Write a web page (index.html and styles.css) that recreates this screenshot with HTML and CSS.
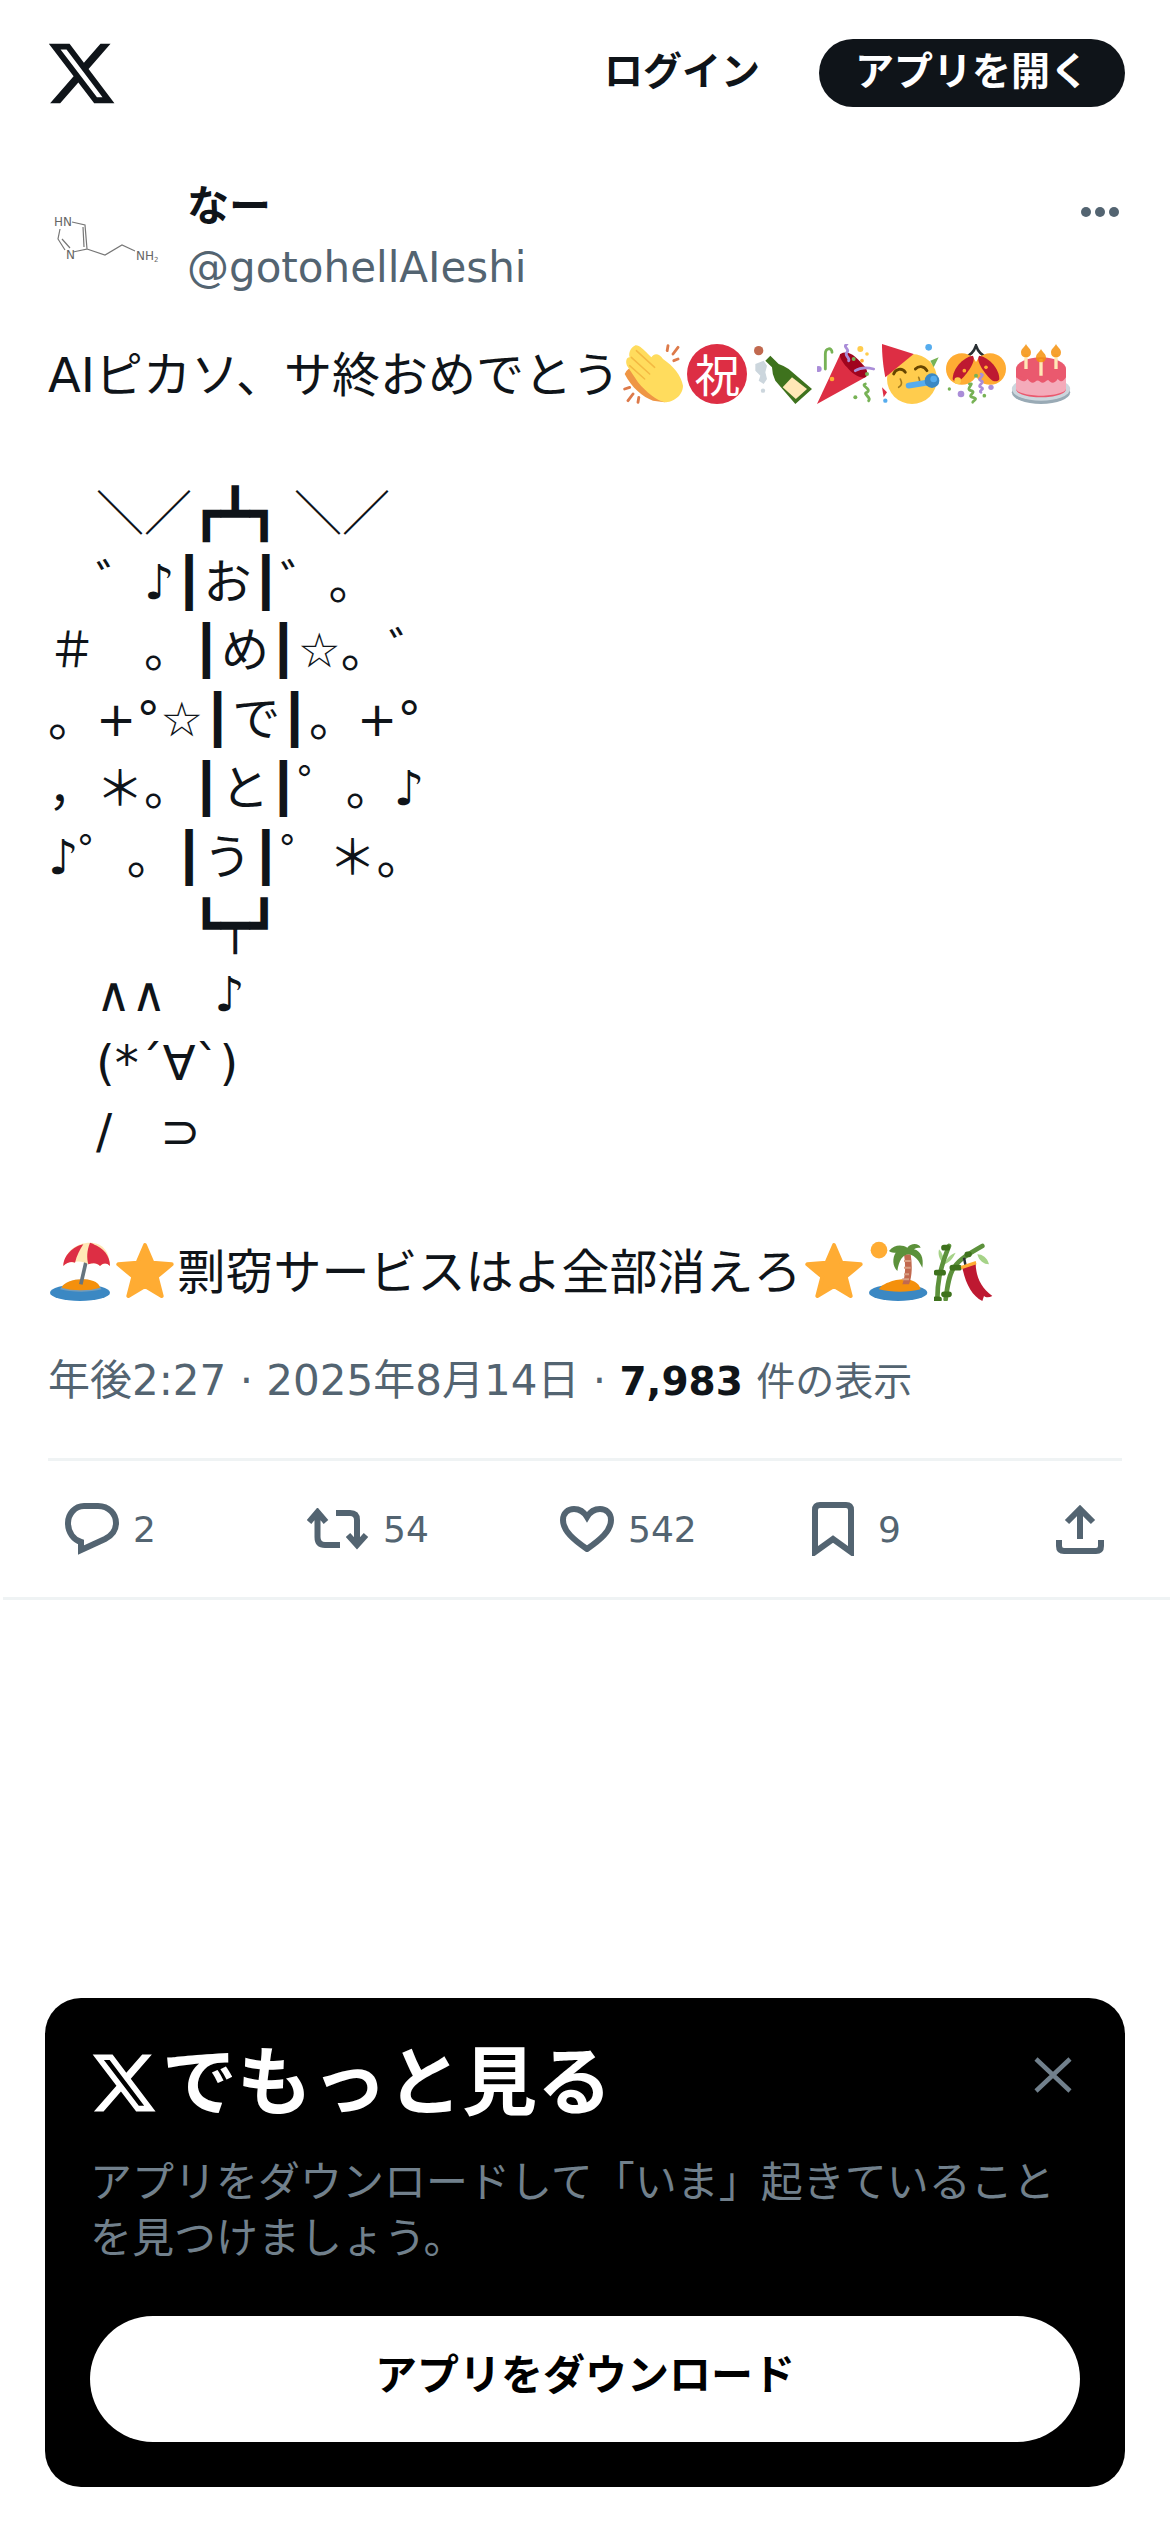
FILE: index.html
```html
<!DOCTYPE html>
<html lang="ja">
<head>
  <meta charset="UTF-8" />
  <meta name="viewport" content="width=device-width, initial-scale=1" />
  <title>なー on X</title>
  <link rel="stylesheet" href="styles.css">
</head>
<body>

  <svg class="defs" width="0" height="0">
    <symbol id="x-logo" viewBox="0 0 24 24"><path d="M18.244 2.25h3.308l-7.227 8.26 8.502 11.24H16.17l-5.214-6.817L4.99 21.75H1.68l7.73-8.835L1.254 2.25H8.08l4.713 6.231zm-1.161 17.52h1.833L7.084 4.126H5.117z"/></symbol>

    <symbol id="e-clap" viewBox="0 0 36 36">
      <path fill="#EF9645" d="M1 18C3 14 6 13 8 15L28 28 25 35 18 34C12 32 5 26 1 18Z"/>
      <path fill="#FFDC5D" d="M7 1C9 0 12 3 15 6L17 8C19 5 22 6 24 9 30 13 35 19 36 25 36 31 30 35 25 35 20 34 14 29 9 23L3 14C1 11 2 8 4 8 3 5 5 2 7 1Z"/>
      <g fill="none" stroke="#F4B942" stroke-width=".9" stroke-linecap="round"><path d="M8 4 19 14M5 8 16 18M4 13 13 21"/></g>
      <g fill="none" stroke="#DD7A4A" stroke-width="1.7" stroke-linecap="round"><path d="M27 1 26.500 4M33 2 30 6M33 9 30.500 10M1 27 4 26M3 34 6 30M9 35 9.500 32"/></g>
    </symbol>

    <symbol id="e-bottle" viewBox="0 0 36 36">
      <circle cx="4" cy="4" r="2.800" fill="#C1694F"/>
      <path fill="#CCD6DD" d="M2 12l5-2 2 3-1 4 1 4-2 3-3-2 1-3-3-3z"/>
      <circle cx="6.600" cy="28" r="1.300" fill="#CCD6DD"/>
      <path fill="#3E721D" d="M8 10 11 7 16 12Q19 13 22 15L36 27 26 36 14 22Q12 18 12 14Z"/>
      <path fill="#FFE8B6" d="M24 20 33 27 26.300 33 18.400 26Z"/>
    </symbol>

    <symbol id="e-popper" viewBox="0 0 36 36">
      <path fill="#DD2E44" d="M0 36 14 6l15 14z"/>
      <path fill="#A0041E" d="M14 6c5-3 10 2 15 8 2 3 1 6 0 6-3 1-8-2-11-6-3-3-5-7-4-8z"/>
      <circle cx="9" cy="21" r="1.400" fill="#FFAC33"/>
      <g fill="none" stroke-width="1.700" stroke-linecap="round">
        <path stroke="#77B255" d="M5 15V6c0-4 4-4 4-1"/>
        <path stroke="#AA8DD8" d="M18 0c-3 2 2 3 0 5s2 3 1 5M23 16c3-2 7-2 11-1"/>
        <path stroke="#77B255" d="M29 24c-3 1 4 3 1 5-3 1 3 3 1 5"/>
      </g>
      <circle cx="1" cy="15" r="1.800" fill="#AA8DD8"/><circle cx="26" cy="3" r="1.800" fill="#FFCC4D"/>
      <circle cx="22" cy="9" r="1.200" fill="#77B255"/><circle cx="27" cy="10" r="1.100" fill="#FFAC33"/>
      <circle cx="30" cy="6" r="1.100" fill="#FFCC4D"/><circle cx="30" cy="18" r="1.200" fill="#77B255"/>
      <circle cx="23" cy="32" r="1.200" fill="#77B255"/>
    </symbol>

    <symbol id="e-party" viewBox="0 0 36 36">
      <circle cx="18" cy="21" r="15" fill="#FFCC4D"/>
      <path fill="#DD2E44" d="M0 0 19 6 2 20c0 0-2-9-2-20z"/>
      <path fill="#DD2E44" d="M1 32l-1-6 3 3z"/>
      <path fill="#77B255" d="M34 8l-3 6-2-4z"/>
      <circle cx="28" cy="2" r="2" fill="#55ACEE"/><circle cx="2" cy="34" r="1.300" fill="#55ACEE"/>
      <g fill="none" stroke="#664500" stroke-width="1.700" stroke-linecap="round">
        <path d="M7 18c1-3 5-4 7-1M20 15c2-2 5-2 7 1"/>
        <path d="M10 26c2-1 2-3 1-5M22 25c1-2 1-3 0-5" stroke-width="1" opacity=".6"/>
      </g>
      <path d="M16 25 28 23" stroke="#55ACEE" stroke-width="3.500" stroke-linecap="round"/>
      <circle cx="30" cy="22" r="4.400" fill="#3B88C3"/><circle cx="31" cy="21" r="2" fill="#55ACEE"/>
    </symbol>

    <symbol id="e-ball" viewBox="0 0 36 36">
      <path d="M11 8c4-1 6-4 7-7 1 3 3 6 7 7" fill="none" stroke="#292F33" stroke-width="1.600"/>
      <circle cx="9.500" cy="15" r="9.500" fill="#FFAC33"/><circle cx="26.500" cy="15" r="9.500" fill="#FFAC33"/>
      <path fill="#BE1931" d="M4 21c0-6 6-13 12-14 3 3-5 13-8 15-2 1-4 0-4-1z"/>
      <path fill="#BE1931" d="M32 21c0-6-6-13-12-14-3 3 5 13 8 15 2 1 4 0 4-1z"/>
      <circle cx="11" cy="16" r="1.100" fill="#FFAC33"/><circle cx="24" cy="14" r="1.100" fill="#FFAC33"/>
      <circle cx="7" cy="22" r="2" fill="#FFCC4D"/>
      <g fill="none" stroke-width="1.600" stroke-linecap="round">
        <path stroke="#77B255" d="M14 24c4-1-3 3 1 4s-3 3 1 4 0 2 0 3"/>
        <path stroke="#AA8DD8" d="M21 18c3 1-3 3 0 4s-3 3 0 4-2 2 0 3"/>
      </g>
      <circle cx="9" cy="30" r="2" fill="#AA8DD8"/><circle cx="27" cy="26" r="1.600" fill="#AA8DD8"/>
      <circle cx="2" cy="27" r="1" fill="#77B255"/><circle cx="18" cy="19" r="1.200" fill="#77B255"/><circle cx="23" cy="31" r="1.100" fill="#77B255"/>
    </symbol>

    <symbol id="e-cake" viewBox="0 0 36 36">
      <ellipse cx="18" cy="29" rx="17.500" ry="7" fill="#99AAB5"/>
      <ellipse cx="18" cy="27" rx="17.500" ry="7" fill="#CCD6DD"/>
      <path fill="#EA596E" d="M3 15v12c0 3 7 5 15 5s15-2 15-5V15z"/>
      <path fill="#F4ABBA" d="M3 20v7c0 2 7 4 15 4s15-2 15-4v-7c-2 3-3 3-5 1-2 3-4 3-6 0-2 3-4 3-6 0-2 3-4 3-6 0-2 2-3 2-7-1z"/>
      <ellipse cx="18" cy="15" rx="15" ry="7" fill="#EA596E"/>
      <path d="M9 6v9M18 9v10M27 6v9" stroke="#FFE8B6" stroke-width="2"/>
      <path fill="#F4900C" d="M9 0c1 2 3 3 3 5s-1 3-3 3-3-1-3-3 2-3 3-5zM18 3c1 2 3 3 3 5s-1 3-3 3-3-1-3-3 2-3 3-5zM27 0c1 2 3 3 3 5s-1 3-3 3-3-1-3-3 2-3 3-5z" opacity=".85"/>
    </symbol>

    <symbol id="e-beach" viewBox="0 0 36 36">
      <ellipse cx="18" cy="31" rx="18" ry="5" fill="#3B88C3"/>
      <path fill="#99AAB5" d="M6 29c2-4 8-6 13-6s10 2 12 6c-7 2-18 2-25 0z" opacity=".6"/>
      <path fill="#F4900C" d="M7 28c1-3 7-5 12-5s10 1 11 5c-6 2-17 2-23 0z"/>
      <path d="M18.500 26 24 2" stroke="#66757F" stroke-width="2.200"/>
      <path fill="#FFE8B6" d="M8 15C9 6 16 1 24 1s12 6 12 14c-2-2-3-2-6 0-2-2-4-2-7-1-3-2-7-2-9-1-2-1-4 0-6 2z"/>
      <path fill="#DD2E44" d="M8 15c0-6 6-12 12-13-2 3-4 7-5 11-2-1-5 0-7 2zM23 14c-1-4-1-8 1-13 5 1 8 7 6 14-2-2-4-2-7-1zM30 15c1-5 0-9-4-13 6 2 10 7 10 13-2-2-4-2-6 0z"/>
    </symbol>

    <symbol id="e-star" viewBox="0 0 36 36">
      <path fill="#FFAC33" stroke="#FFAC33" stroke-width="2.400" stroke-linejoin="round" d="M18 2.500 22.500 13 34 14 25 21.500 28 33 18 27 8 33 11 21.500 2 14 13.500 13z"/>
    </symbol>

    <symbol id="e-island" viewBox="0 0 36 36">
      <circle cx="6" cy="5.500" r="5" fill="#FFAC33"/>
      <ellipse cx="17.500" cy="31" rx="17.500" ry="5" fill="#3B88C3"/>
      <path fill="#F4900C" d="M6 29c1-3 9-6 15-6 5 0 9 2 10 6-7 2-18 2-25 0z"/>
      <path fill="#C1694F" d="M20 26c2-5 2-12 1-18h4c1 6 1 13-1 18z"/>
      <path d="M21 12h4M21 16h4M21 20h3M20 23h4" stroke="#D99E82" stroke-width="1.200"/>
      <path fill="#5C913B" d="M12 6c3-4 8-4 11-2 2-3 7-3 8 0-2 0-3 0-4 1 4 1 6 5 5 11-2-4-4-7-8-8-4 0-6 4-7 10-3-3-3-8-1-11-1 0-3 0-4-1z"/>
    </symbol>

    <symbol id="e-bamboo" viewBox="0 0 36 36">
      <path fill="#A6D388" d="M3 5c2 2 3 5 3 9-2-2-4-5-3-9zM13 7c-2 4-4 6-7 7 1-3 4-6 7-7zM26 8c3 0 6 2 7 6-3 0-6-2-7-6z"/>
      <g fill="none" stroke-linecap="round">
        <path stroke="#5C913B" stroke-width="2.800" d="M2 35C2 26 3 18 9 3M7 35c1-8 2-15 5-19 3-5 10-9 17-13"/>
        <path stroke="#3E721D" stroke-width="3.400" d="M1 35h2M1.500 19h4M6 32h3M6 4h2M11 16h4M20 8h1"/>
      </g>
      <path d="M18 10l1 5" stroke="#292F33" stroke-width="1.500"/>
      <path fill="#BE1931" d="M17 16l8-3c0 8 3 15 10 20-2 1-4 1-5 0l-1 3c-6-3-10-10-12-20z"/>
      <path fill="#FFAC33" d="M16 15l9-3 .5 2-9 3z"/>
    </symbol>
  </svg>

  <header class="top-bar">
    <svg class="logo"><use href="#x-logo"/></svg>
    <span class="login">ログイン</span>
    <span class="open-app">アプリを開く</span>
  </header>

  <main class="tweet">
    <div class="author">
      <svg class="avatar" viewBox="0 0 130 70">
        <g fill="none" stroke="#777" stroke-width="1.200">
          <path d="M32 17 45 20 47 44 33 47M25 45 18 34 20 24M22 34l8 9M47 44 65 50 82 40 95 46M43 22l1 20"/>
        </g>
        <g class="avatar-label">
          <text x="14" y="21">HN</text>
          <text x="26" y="54">N</text>
          <text x="96" y="55">NH<tspan class="avatar-sub" dy="2">2</tspan></text>
        </g>
      </svg>
      <div class="names">
        <div class="name">なー</div>
        <div class="handle">@gotohellAIeshi</div>
      </div>
      <svg class="more" viewBox="0 0 40 10"><circle cx="6" cy="5" r="5"/><circle cx="20" cy="5" r="5"/><circle cx="34" cy="5" r="5"/></svg>
    </div>

    <div class="text">AIピカソ、サ終おめでとう<svg class="emoji"><use href="#e-clap"/></svg><span class="iwai">祝</span><svg class="emoji"><use href="#e-bottle"/></svg><svg class="emoji"><use href="#e-popper"/></svg><svg class="emoji"><use href="#e-party"/></svg><svg class="emoji"><use href="#e-ball"/></svg><svg class="emoji"><use href="#e-cake"/></svg></div>
    <div class="art">　＼／┏┻┓ ＼／
　゛♪┃お┃゛。
＃　。┃め┃☆。゛
。+°☆┃で┃。+°
，＊。┃と┃゜。♪
♪゜。┃う┃゜＊。
　　　┗┯┛
　∧∧　♪
　(*´∀`)
　/　⊃</div>
    <div class="text text-last"><svg class="emoji"><use href="#e-beach"/></svg><svg class="emoji"><use href="#e-star"/></svg>剽窃サービスはよ全部消えろ<svg class="emoji"><use href="#e-star"/></svg><svg class="emoji"><use href="#e-island"/></svg><svg class="emoji"><use href="#e-bamboo"/></svg></div>

    <div class="meta">年後2:27 · 2025年8月14日 · <b>7,983</b> <span class="views">件の表示</span></div>

    <div class="stats">
      <div class="stat">
        <svg class="icon" width="54" height="52" viewBox="0 0 54 52"><path d="M19 3H33C44 3 51 11 51 20 51 28 46 33 40 36L16 47V39C9 37 3 30 3 20 3 11 10 3 19 3Z"/></svg>
        <span>2</span>
      </div>
      <div class="stat">
        <svg class="icon" width="62" height="42" viewBox="0 0 62 42"><path d="M2 14 10.500 4 19 14M10.500 4V29Q10.500 37 18 37H33M29 5H43Q50 5 50 12V37M41 27 50 37 59 27"/></svg>
        <span>54</span>
      </div>
      <div class="stat">
        <svg class="icon" width="54" height="46" viewBox="0 0 54 46"><path d="M27 43C14 34 3 25 3 14 3 7 8 3 14 3 20 3 24 6 27 11 30 6 34 3 40 3 46 3 51 7 51 14 51 25 40 34 27 43Z"/></svg>
        <span>542</span>
      </div>
      <div class="stat stat-wide">
        <svg class="icon" width="42" height="54" viewBox="0 0 42 54"><path d="M3 50V8Q3 3 8 3H34Q39 3 39 8V50L21 37Z"/></svg>
        <span>9</span>
      </div>
      <div class="stat">
        <svg class="icon" width="48" height="49" viewBox="0 0 48 49"><path d="M24 6V34M11 17 24 4 37 17M3 35V41Q3 46 8 46H40Q45 46 45 41V35"/></svg>
      </div>
    </div>
  </main>

  <aside class="promo">
    <div class="promo-head">
      <h2 class="promo-title"><svg class="promo-logo"><use href="#x-logo"/></svg>でもっと見る</h2>
      <svg class="promo-close" viewBox="0 0 38 36"><path d="M2 2 36 34M36 2 2 34"/></svg>
    </div>
    <p class="promo-text">アプリをダウンロードして「いま」起きていることを見つけましょう。</p>
    <div class="promo-btn">アプリをダウンロード</div>
  </aside>

</body>
</html>
```

FILE: styles.css
```css
body {
  font-family: "DejaVu Sans", "Noto Sans CJK JP", sans-serif;
  margin: 0;
  height: 2532px;
  position: relative;
  overflow: hidden;
  background: #fff;
  color: #0f1419;
}

.defs {
  display: block;
}

.top-bar {
  display: flex;
  align-items: center;
  height: 146px;
  padding: 0 45px 0 45px;
}

.logo {
  width: 73px;
  height: 73px;
  fill: #0f1419;
  margin-right: auto;
}

.login {
  font-size: 39px;
  font-weight: bold;
  margin: 0 59px 10px 0;
}

.open-app {
  font-size: 39px;
  font-weight: bold;
  color: #fff;
  background: #0f1419;
  width: 306px;
  height: 68px;
  padding-bottom: 10px;
  box-sizing: border-box;
  border-radius: 34px;
  display: flex;
  align-items: center;
  justify-content: center;
}

.author {
  display: flex;
  margin-top: 28px;
  padding: 0 50px 0 40px;
}

.avatar {
  width: 130px;
  height: 70px;
  margin-top: 31px;
  margin-right: 17px;
  flex: none;
}

.avatar-label {
  font-size: 12px;
  fill: #666;
}

.avatar-sub {
  font-size: 7px;
}

.names {
  flex: 1;
  padding-top: 3px;
}

.name {
  font-size: 42px;
  font-weight: bold;
  line-height: 60px;
}

.handle {
  font-size: 42px;
  line-height: 61px;
  color: #536471;
}

.more {
  width: 40px;
  height: 10px;
  margin-top: 33px;
  fill: #536471;
}

.text {
  font-size: 48px;
  line-height: 69px;
  white-space: pre;
  margin-top: 43px;
  padding: 0 48px;
}

.text-last {
  margin-top: 72px;
}

.art {
  font-size: 48px;
  line-height: 68.7px;
  white-space: pre;
  margin-top: 69px;
  padding: 0 48px;
}

.emoji {
  width: 60px;
  height: 60px;
  margin: 0 2.4px;
  vertical-align: -0.25em;
}

.iwai {
  display: inline-block;
  width: 60px;
  height: 60px;
  margin: 0 2.4px;
  border-radius: 50%;
  background: #dd2e44;
  color: #fff;
  font-family: "Noto Sans CJK JP", sans-serif;
  font-size: 45px;
  line-height: 60px;
  text-align: center;
  vertical-align: -1px;
}

.meta {
  font-size: 42px;
  line-height: 60px;
  color: #536471;
  margin: 44px 48px 0;
}

.meta b {
  font-size: 39px;
  color: #0f1419;
}

.views {
  font-size: 39px;
}

.stats {
  display: grid;
  grid-template-columns: 242px 253px 252px 244px auto;
  align-items: center;
  height: 136px;
  margin-top: 49px;
  padding-left: 65px;
  position: relative;
}

.stats::before {
  content: "";
  position: absolute;
  top: -3px;
  left: 48px;
  right: 48px;
  height: 3px;
  background: #eff3f4;
}

.stats::after {
  content: "";
  position: absolute;
  bottom: -3px;
  left: 3px;
  right: 0;
  height: 3px;
  background: #eff3f4;
}

.stat {
  display: flex;
  align-items: center;
  gap: 14px;
  font-size: 36px;
  color: #536471;
}

.stat-wide {
  gap: 24px;
}

.icon {
  fill: none;
  stroke: #536471;
  stroke-width: 6;
  flex: none;
}

.promo {
  position: absolute;
  left: 45px;
  right: 45px;
  bottom: 45px;
  height: 489px;
  box-sizing: border-box;
  padding: 45px 45px 0 45px;
  background: #000;
  border-radius: 36px;
}

.promo-head {
  display: flex;
  align-items: flex-start;
  justify-content: space-between;
}

.promo-title {
  display: flex;
  align-items: center;
  margin: 0;
  font-size: 75px;
  font-weight: bold;
  line-height: 80px;
  color: #fff;
}

.promo-logo {
  width: 70px;
  height: 70px;
  fill: #fff;
  margin: 0 3px 0 -1px;
}

.promo-close {
  width: 38px;
  height: 36px;
  margin: 14px 8px 0 0;
  fill: none;
  stroke: #71808c;
  stroke-width: 4.5;
}

.promo-text {
  font-size: 42px;
  line-height: 56px;
  color: #71808c;
  margin: 32px 0 0;
}

.promo-btn {
  display: flex;
  align-items: center;
  justify-content: center;
  height: 126px;
  margin-top: 49px;
  padding-bottom: 16px;
  box-sizing: border-box;
  border-radius: 63px;
  background: #fff;
  color: #000;
  font-size: 42px;
  font-weight: bold;
}
```
